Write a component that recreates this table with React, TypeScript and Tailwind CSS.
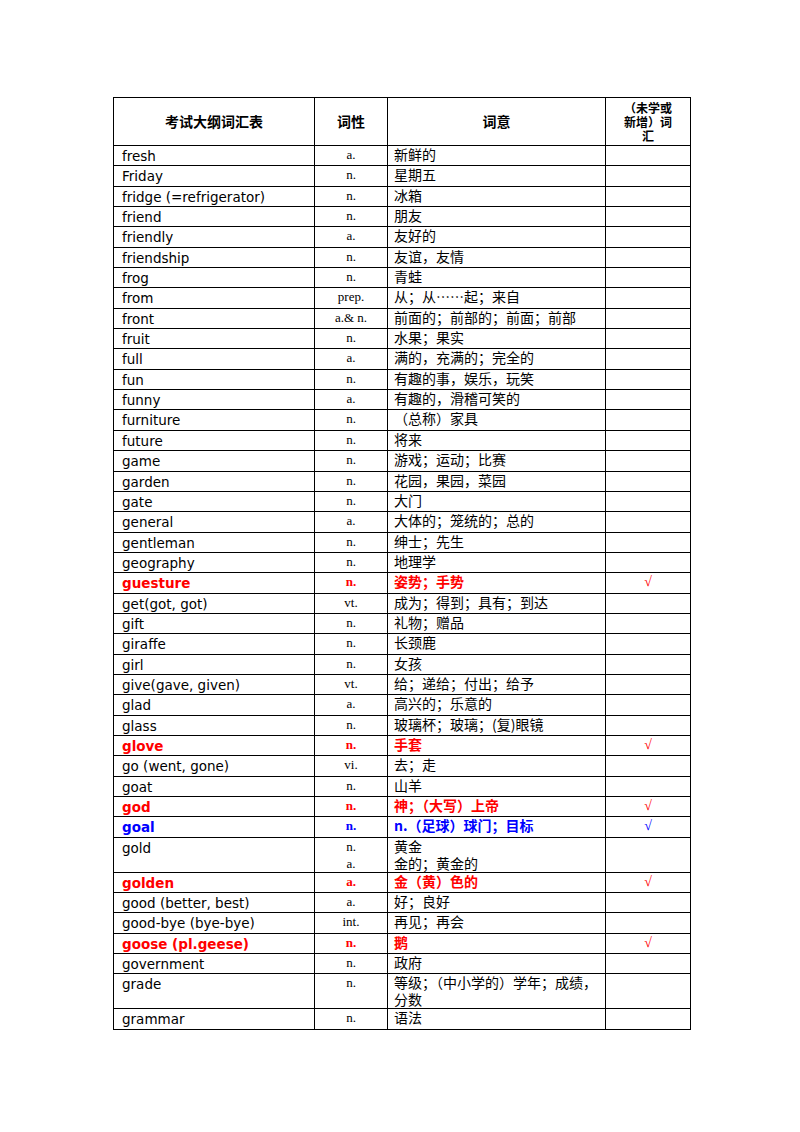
import React from "react";

type Row = {
  word: string;
  pos: string[];
  meaning: string[];
  tone?: "red" | "blue";
  check?: boolean;
  tall?: string;
};

const rows: Row[] = [
  { word: "fresh", pos: ["a."], meaning: ["新鲜的"] },
  { word: "Friday", pos: ["n."], meaning: ["星期五"] },
  { word: "fridge (=refrigerator)", pos: ["n."], meaning: ["冰箱"] },
  { word: "friend", pos: ["n."], meaning: ["朋友"] },
  { word: "friendly", pos: ["a."], meaning: ["友好的"] },
  { word: "friendship", pos: ["n."], meaning: ["友谊，友情"] },
  { word: "frog", pos: ["n."], meaning: ["青蛙"] },
  { word: "from", pos: ["prep."], meaning: ["从；从……起；来自"] },
  { word: "front", pos: ["a.& n."], meaning: ["前面的；前部的；前面；前部"] },
  { word: "fruit", pos: ["n."], meaning: ["水果；果实"] },
  { word: "full", pos: ["a."], meaning: ["满的，充满的；完全的"] },
  { word: "fun", pos: ["n."], meaning: ["有趣的事，娱乐，玩笑"] },
  { word: "funny", pos: ["a."], meaning: ["有趣的，滑稽可笑的"] },
  { word: "furniture", pos: ["n."], meaning: ["（总称）家具"] },
  { word: "future", pos: ["n."], meaning: ["将来"] },
  { word: "game", pos: ["n."], meaning: ["游戏；运动；比赛"] },
  { word: "garden", pos: ["n."], meaning: ["花园，果园，菜园"] },
  { word: "gate", pos: ["n."], meaning: ["大门"] },
  { word: "general", pos: ["a."], meaning: ["大体的；笼统的；总的"] },
  { word: "gentleman", pos: ["n."], meaning: ["绅士；先生"] },
  { word: "geography", pos: ["n."], meaning: ["地理学"] },
  { word: "guesture", pos: ["n."], meaning: ["姿势；手势"], tone: "red", check: true },
  { word: "get(got, got)", pos: ["vt."], meaning: ["成为；得到；具有；到达"] },
  { word: "gift", pos: ["n."], meaning: ["礼物；赠品"] },
  { word: "giraffe", pos: ["n."], meaning: ["长颈鹿"] },
  { word: "girl", pos: ["n."], meaning: ["女孩"] },
  { word: "give(gave, given)", pos: ["vt."], meaning: ["给；递给；付出；给予"] },
  { word: "glad", pos: ["a."], meaning: ["高兴的；乐意的"] },
  { word: "glass", pos: ["n."], meaning: ["玻璃杯；玻璃；(复)眼镜"] },
  { word: "glove", pos: ["n."], meaning: ["手套"], tone: "red", check: true },
  { word: "go (went, gone)", pos: ["vi."], meaning: ["去；走"] },
  { word: "goat", pos: ["n."], meaning: ["山羊"] },
  { word: "god", pos: ["n."], meaning: ["神；（大写）上帝"], tone: "red", check: true },
  { word: "goal", pos: ["n."], meaning: ["n.（足球）球门；目标"], tone: "blue", check: true },
  { word: "gold", pos: ["n.", "a."], meaning: ["黄金", "金的；黄金的"], tall: "h-[34px]" },
  { word: "golden", pos: ["a."], meaning: ["金（黄）色的"], tone: "red", check: true },
  { word: "good (better, best)", pos: ["a."], meaning: ["好；良好"] },
  { word: "good-bye (bye-bye)", pos: ["int."], meaning: ["再见；再会"] },
  { word: "goose (pl.geese)", pos: ["n."], meaning: ["鹅"], tone: "red", check: true },
  { word: "government", pos: ["n."], meaning: ["政府"] },
  { word: "grade", pos: ["n."], meaning: ["等级；（中小学的）学年；成绩，分数"], tall: "h-[35px]" },
  { word: "grammar", pos: ["n."], meaning: ["语法"] },
];

const en = "font-['DejaVu_Sans',sans-serif]";
const cjk = "font-['Noto_Sans_CJK_SC','Noto_Sans',sans-serif]";
const serif = "font-['Liberation_Serif',serif]";

export default function App() {
  return (
    <div className="min-h-[1132px] w-[800px] bg-white pt-[97px] pl-[113px] text-black">
      <table className="w-[577px] table-fixed border-collapse">
        <colgroup>
          <col className="w-[201px]" />
          <col className="w-[73px]" />
          <col className="w-[218px]" />
          <col className="w-[85px]" />
        </colgroup>
        <thead>
          <tr className={`h-[48px] ${cjk} text-[14px] font-bold`}>
            <th className="border border-black p-0">考试大纲词汇表</th>
            <th className="border border-black p-0">词性</th>
            <th className="border border-black p-0">词意</th>
            <th className="border border-black p-0 pt-[1px] text-[12px] leading-[14px]">
              （未学或
              <br />
              新增）词
              <br />汇
            </th>
          </tr>
        </thead>
        <tbody>
          {rows.map((r) => {
            const color =
              r.tone === "red"
                ? "text-[#ff0000] font-bold"
                : r.tone === "blue"
                ? "text-[#0000ff] font-bold"
                : "";
            return (
              <tr key={r.word} className={r.tall ?? "h-[20.35px]"}>
                <td
                  className={`border border-black px-[8px] pt-[2px] pb-0 align-top text-[13.5px] leading-[17px] whitespace-nowrap ${en} ${color}`}
                >
                  {r.word}
                </td>
                <td
                  className={`border border-black p-0 align-top text-center text-[13px] leading-[17px] ${serif} ${color}`}
                >
                  {r.pos.map((p) => (
                    <div key={p}>{p}</div>
                  ))}
                </td>
                <td
                  className={`border border-black p-0 pl-[6px] pr-[4px] align-top text-[14px] leading-[17px] ${cjk} ${color}`}
                >
                  {r.meaning.map((m) => (
                    <div key={m}>{m}</div>
                  ))}
                </td>
                <td
                  className={`border border-black p-0 align-top text-center text-[14px] leading-[17px] ${serif} ${
                    r.tone === "blue" ? "text-[#0000ff]" : "text-[#ff0000]"
                  }`}
                >
                  {r.check ? "√" : ""}
                </td>
              </tr>
            );
          })}
        </tbody>
      </table>
    </div>
  );
}
